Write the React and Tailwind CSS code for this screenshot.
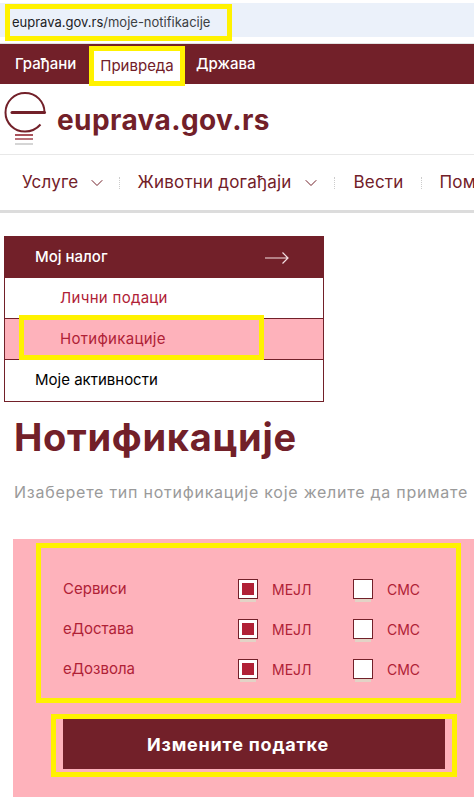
import { ChevronDown } from 'lucide-react';

const Logo = () => (
  <svg width="46" height="56" viewBox="0 0 46 56" fill="none" className="shrink-0">
    <path d="M40.500 21.500H8" stroke="#722029" strokeWidth="3" strokeLinecap="round" />
    <path d="M40.500 21.500C40.500 10.500 32 2 21 2C10.500 2 1.500 10.500 1.500 21.500C1.500 32 10 40.500 21 40.500C27.500 40.500 32.500 38 36.500 33.500" stroke="#722029" strokeWidth="2" />
    <rect x="11" y="43" width="18" height="2" fill="#a9525b" />
    <rect x="11" y="47" width="18" height="2" fill="#b9727a" />
    <rect x="11" y="52" width="18" height="2" fill="#d5d5d5" />
  </svg>
);

const services = ['Сервиси', 'еДостава', 'еДозвола'];

const Check = ({ on, label }) => (
  <div className="flex items-center">
    <div className="relative w-5 h-5 bg-white border border-[#722029] flex items-center justify-center">
      {on && <div className="w-3 h-3 bg-[#b02136]" />}
      <div className="absolute left-[1px] right-[1px] top-[19px] h-[3px] bg-[#e3d3c6]" />
    </div>
    <span className={`text-[14px] text-[#b02136] ${on ? 'ml-[14px] w-[40px]' : 'ml-[14px]'}`}>{label}</span>
  </div>
);

export default function App() {
  return (
    <div className="w-[474px] h-[797px] overflow-hidden bg-white font-['Inter','Liberation_Sans',sans-serif] relative">
      <div className="h-[44px] pt-[3px] border-b border-[#e2e2e2]">
        <div className="h-[34px] bg-[#ebf1fa] relative">
          <div className="absolute left-[5px] top-[1px] w-[227px] h-[37px] border-[5px] border-[#fff200] flex items-center pl-[2px] text-[13px] text-[#3c4043] whitespace-nowrap">
            <span className="text-[#202124]">euprava.gov.rs</span>/moje-notifikacije
          </div>
        </div>
      </div>

      <div className="h-[40px] bg-[#722029] flex items-center text-[15px] font-medium text-white relative">
        <span className="ml-[15px] w-[72px]">Грађани</span>
        <div className="absolute left-[89px] top-[2px] w-[96px] h-[40px] bg-white border-[5px] border-[#fff200] flex items-center justify-center font-normal text-[#722029] z-10">
          Привреда
        </div>
        <span className="ml-[109px]">Држава</span>
      </div>

      <div className="h-[71px] flex items-center border-b border-[#e8e8e8] pl-[4px]">
        <Logo />
        <span className="ml-[7px] mt-[1px] text-[28px] font-bold text-[#722029] tracking-[0.4px]">euprava.gov.rs</span>
      </div>

      <div className="h-[58px] flex items-center text-[17px] tracking-[0.2px] text-[#722029] border-b-[3px] border-[#dcdcdc] whitespace-nowrap pl-[22px] overflow-hidden">
        <span className="shrink-0">Услуге</span>
        <ChevronDown size={20} strokeWidth={1.2} className="ml-[9px] shrink-0" />
        <span className="ml-[12px] h-[12px] border-l border-dotted border-[#cccccc]" />
        <span className="ml-[17px] shrink-0">Животни догађаји</span>
        <ChevronDown size={20} strokeWidth={1.2} className="ml-[10px] shrink-0" />
        <span className="ml-[13px] h-[12px] border-l border-dotted border-[#cccccc]" />
        <span className="ml-[18px] shrink-0">Вести</span>
        <span className="ml-[18px] h-[12px] border-l border-dotted border-[#cccccc]" />
        <span className="ml-[17px] shrink-0">Помоћ</span>
      </div>

      <div className="mt-[23px] ml-[4px] w-[320px] border border-[#722029] text-[15px]">
        <div className="h-[41px] bg-[#722029] text-white font-medium flex items-center justify-between pl-[30px] pr-[34px]">
          <span>Мој налог</span>
          <svg width="24" height="12" viewBox="0 0 24 12" fill="none" stroke="#f4dfe2" strokeWidth="1.2">
            <path d="M0 6H23M17.500 0.500L23 6L17.500 11.500" />
          </svg>
        </div>
        <div className="h-[41px] flex items-center pl-[55px] text-[#b02136] tracking-[0.3px] border-b border-[#722029]">Лични подаци</div>
        <div className="h-[41px] bg-[#feb2bb] flex items-center pl-[55px] text-[#b02136] tracking-[0.3px] border-b border-[#722029] relative">
          Нотификације
          <div className="absolute left-[14px] top-[-4px] w-[245px] h-[45px] border-[5px] border-[#fff200]" />
        </div>
        <div className="h-[41px] flex items-center pl-[30px] text-black">Моје активности</div>
      </div>

      <h1 className="ml-[14px] mt-[10px] text-[38px] tracking-[0.7px] leading-[50px] font-bold text-[#722029]">Нотификације</h1>
      <p className="ml-[14px] mt-[18px] text-[16px] tracking-[0.75px] leading-[24px] text-[#9a9a9a] whitespace-nowrap">Изаберете тип нотификације које желите да примате</p>

      <div className="absolute left-[13px] top-[539px] w-[461px] h-[258px] bg-[#feb2bb] pt-[4px]">
        <div className="ml-[23px] w-[425px] h-[160px] border-[5px] border-[#fff200] pt-[31px] flex flex-col gap-[20px]">
          {services.map((name) => (
            <div key={name} className="h-[20px] flex items-center">
              <span className="ml-[22px] w-[175px] text-[15px] text-[#b02136]">{name}</span>
              <Check on label="МЕЈЛ" />
              <div className="ml-[41px]">
                <Check label="СМС" />
              </div>
            </div>
          ))}
        </div>
        <div className="ml-[38px] mt-[11px] w-[406px] h-[63px] border-[5px] border-[#fff200] pl-[7px]">
          <button className="w-[382px] h-[50px] pr-[32px] bg-[#722029] text-white text-[18px] tracking-[0.8px] font-bold">Измените податке</button>
        </div>
      </div>
    </div>
  );
}
